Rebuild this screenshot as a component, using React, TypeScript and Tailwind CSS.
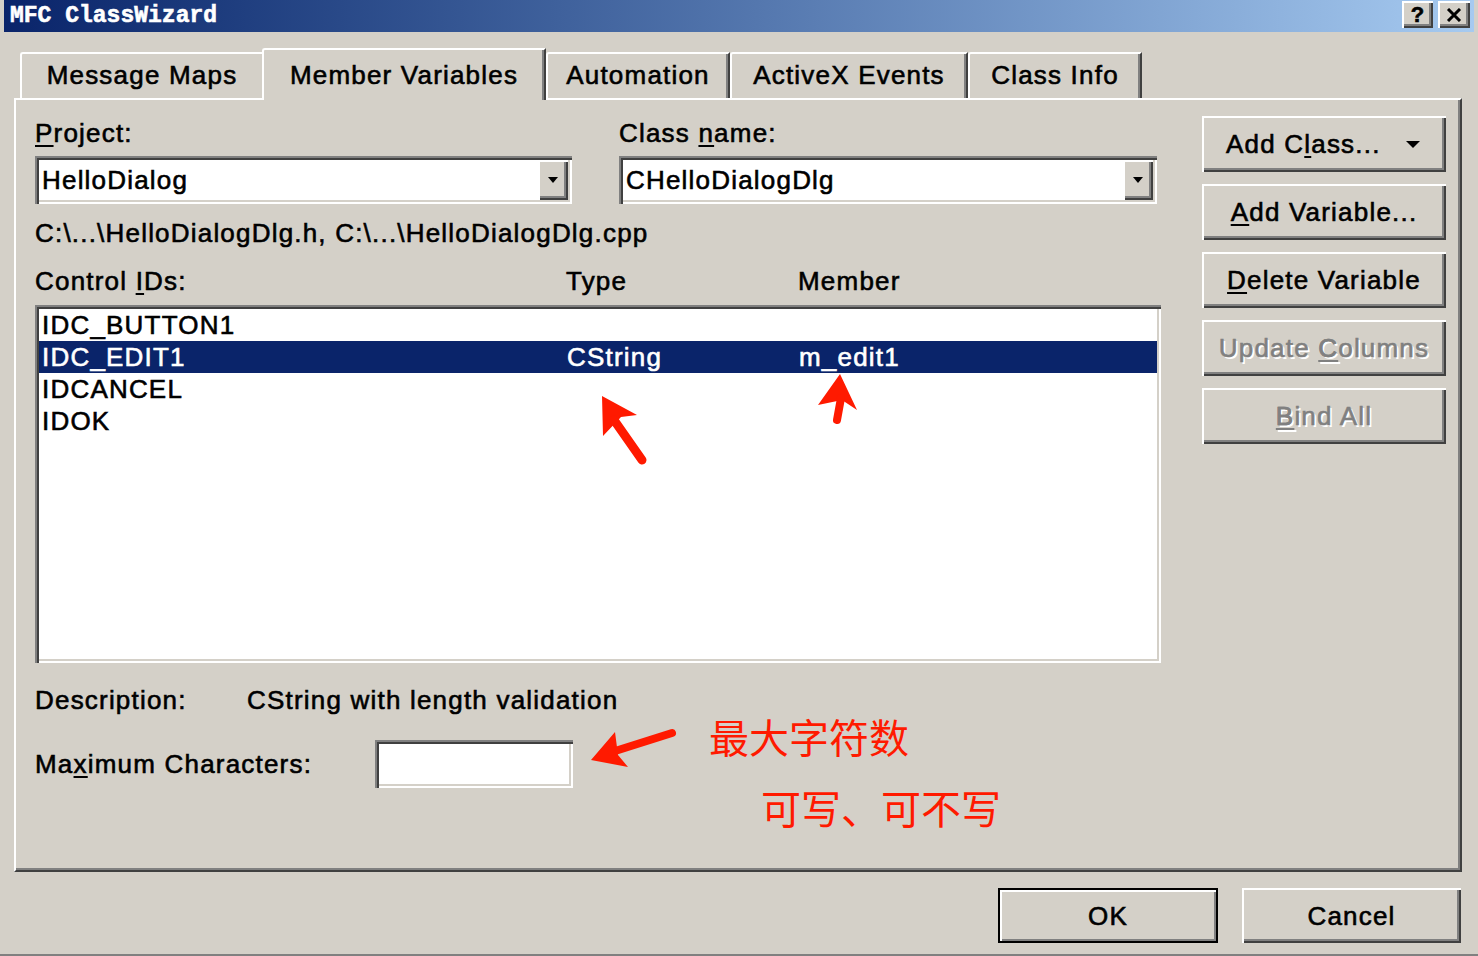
import React from 'react';

const raised = 'shadow-[inset_2px_2px_0_#ffffff,inset_-2px_-2px_0_#404040,inset_-4px_-4px_0_#808080]';
const sunken = 'shadow-[inset_2px_2px_0_#808080,inset_4px_4px_0_#404040,inset_-2px_-2px_0_#ffffff,inset_-4px_-4px_0_#d4d0c8]';

function Arrow({ w = 10, h = 6 }: { w?: number; h?: number }) {
  return (
    <svg width={w} height={h} viewBox={`0 0 ${w} ${h}`}>
      <polygon points={`0,0 ${w},0 ${w / 2},${h}`} fill="#000" />
    </svg>
  );
}

function Combo({ value }: { value: string }) {
  return (
    <div className={`flex h-[48px] items-center bg-white pl-[7px] pr-[4px] ${sunken}`}>
      <span className="flex-1">{value}</span>
      <div className={`flex h-[40px] w-[30px] items-center justify-center bg-[#d4d0c8] ${raised}`}>
        <Arrow />
      </div>
    </div>
  );
}

function SideButton({ children, disabled }: { children: React.ReactNode; disabled?: boolean }) {
  return (
    <div
      className={`flex h-[56px] w-[244px] items-center justify-center ${raised} ${
        disabled ? 'text-[#808080] [text-shadow:2px_2px_0_#ffffff]' : ''
      }`}
    >
      <span>{children}</span>
    </div>
  );
}

const U = ({ children }: { children: React.ReactNode }) => (
  <u className="underline decoration-[2px] underline-offset-[3px]">{children}</u>
);

export default function App() {
  const rows = [
    { id: 'IDC_BUTTON1', type: '', member: '', selected: false },
    { id: 'IDC_EDIT1', type: 'CString', member: 'm_edit1', selected: true },
    { id: 'IDCANCEL', type: '', member: '', selected: false },
    { id: 'IDOK', type: '', member: '', selected: false },
  ];

  return (
    <div className="relative h-[956px] w-[1478px] overflow-hidden border-b-2 border-[#808080] bg-[#d4d0c8] font-['Liberation_Sans',Arial,sans-serif] text-[26px] leading-[30px] tracking-[1.2px] text-black [-webkit-text-stroke:0.6px]">
      {/* title bar */}
      <div className="ml-[4px] flex h-[32px] w-[1470px] bg-linear-to-r from-[#0a246a] to-[#a6caf0] pl-[6px] pr-[4px]">
        <span className="self-center font-['Liberation_Mono',monospace] text-[23px] font-bold leading-none tracking-normal text-white">
          MFC ClassWizard
        </span>
        <div className="ml-auto flex gap-[5px] pt-[1px]">
          <div className={`flex h-[27px] w-[31px] items-center justify-center bg-[#d4d0c8] text-[22px] font-bold leading-none tracking-normal ${raised}`}>
            ?
          </div>
          <div className={`flex h-[27px] w-[32px] items-center justify-center bg-[#d4d0c8] ${raised}`}>
            <svg width="16" height="14" viewBox="0 0 16 14">
              <path d="M2 1 L14 13 M14 1 L2 13" stroke="#000" strokeWidth="3" />
            </svg>
          </div>
        </div>
      </div>

      {/* tabs */}
      <div className="relative z-10 mt-[16px] flex h-[50px] items-end pl-[20px]">
        <div className="flex h-[46px] w-[242px] items-center justify-center rounded-tl-[3px] border-l-2 border-t-2 border-white pb-[2px]">
          Message Maps
        </div>
        <div className="-mb-[2px] flex h-[52px] w-[284px] items-center justify-center rounded-tl-[3px] border-l-2 border-r-2 border-t-2 border-white border-r-[#404040] bg-[#d4d0c8] shadow-[inset_-2px_0_0_#808080]">
          Member Variables
        </div>
        <div className="flex h-[46px] w-[184px] items-center justify-center rounded-tl-[3px] border-l-2 border-r-2 border-t-2 border-white border-r-[#404040] pb-[2px] shadow-[inset_-2px_0_0_#808080]">
          Automation
        </div>
        <div className="flex h-[46px] w-[238px] items-center justify-center rounded-tl-[3px] border-l-2 border-r-2 border-t-2 border-white border-r-[#404040] pb-[2px] shadow-[inset_-2px_0_0_#808080]">
          ActiveX Events
        </div>
        <div className="flex h-[46px] w-[174px] items-center justify-center rounded-tl-[3px] border-l-2 border-r-2 border-t-2 border-white border-r-[#404040] pb-[2px] shadow-[inset_-2px_0_0_#808080]">
          Class Info
        </div>
      </div>

      {/* tab panel */}
      <div className="ml-[14px] flex h-[774px] w-[1448px] border-2 border-white border-b-[#404040] border-r-[#404040] shadow-[inset_-2px_-2px_0_#808080]">
        <div className="w-[1145px] pl-[19px] pt-[18px]">
          <div className="flex gap-[47px]">
            <div className="w-[537px]">
              <div>
                <U>P</U>roject:
              </div>
              <div className="mt-[8px]">
                <Combo value="HelloDialog" />
              </div>
            </div>
            <div className="w-[538px]">
              <div>
                Class <U>n</U>ame:
              </div>
              <div className="mt-[8px]">
                <Combo value="CHelloDialogDlg" />
              </div>
            </div>
          </div>

          <div className="mt-[14px]">C:\...\HelloDialogDlg.h, C:\...\HelloDialogDlg.cpp</div>

          <div className="mt-[18px] grid grid-cols-[531px_232px_1fr]">
            <div>
              Control <U>I</U>Ds:
            </div>
            <div>Type</div>
            <div>Member</div>
          </div>

          <div className={`mt-[9px] h-[358px] w-[1126px] bg-white px-[4px] pt-[4px] ${sunken}`}>
            {rows.map((r) => (
              <div
                key={r.id}
                className={`grid h-[32px] grid-cols-[525px_232px_1fr] items-center pl-[3px] ${
                  r.selected ? 'bg-[#0a246a] text-white' : ''
                }`}
              >
                <span>{r.id}</span>
                <span>{r.type}</span>
                <span>{r.member}</span>
              </div>
            ))}
          </div>

          <div className="mt-[22px] flex">
            <span className="w-[212px]">Description:</span>
            <span>CString with length validation</span>
          </div>

          <div className="mt-[25px] flex items-center">
            <span className="w-[340px]">
              Ma<U>x</U>imum Characters:
            </span>
            <div className={`h-[48px] w-[198px] bg-white ${sunken}`} />
          </div>
        </div>

        <div className="ml-auto flex flex-col gap-[12px] pr-[14px] pt-[16px]">
          <div className={`flex h-[56px] w-[244px] items-center justify-between pl-[24px] pr-[26px] ${raised}`}>
            <span>
              Add C<U>l</U>ass...
            </span>
            <Arrow w={14} h={7} />
          </div>
          <SideButton>
            <U>A</U>dd Variable...
          </SideButton>
          <SideButton>
            <U>D</U>elete Variable
          </SideButton>
          <SideButton disabled>
            Update <U>C</U>olumns
          </SideButton>
          <SideButton disabled>
            <U>B</U>ind All
          </SideButton>
        </div>
      </div>

      {/* dialog buttons */}
      <div className="mt-[16px] flex justify-end gap-[24px] pr-[17px]">
        <div className="flex h-[55px] w-[220px] items-center justify-center border-2 border-black shadow-[inset_2px_2px_0_#ffffff,inset_-2px_-2px_0_#808080]">
          OK
        </div>
        <div className={`flex h-[55px] w-[219px] items-center justify-center ${raised}`}>Cancel</div>
      </div>

      {/* red annotations */}
      <svg className="pointer-events-none absolute left-0 top-0" width="1478" height="956" viewBox="0 0 1478 956">
        <g fill="#ff1a00" stroke="#ff1a00" strokeLinecap="round">
          <polygon points="602,396 637,415 621,417 603,436" stroke="none" />
          <line x1="614" y1="420" x2="642" y2="460" strokeWidth="9" />
          <polygon points="840,374 857,410 842,400 818,405" stroke="none" />
          <line x1="841" y1="398" x2="837" y2="420" strokeWidth="8" />
          <polygon points="591,760 615,732 618,755 628,767" stroke="none" />
          <line x1="612" y1="752" x2="672" y2="733" strokeWidth="8" />
        </g>
      </svg>
      <span className="absolute left-[709px] top-[714px] font-['Noto_Sans_CJK_SC',sans-serif] text-[40px] leading-[44px] tracking-normal text-[#ff1a00] [-webkit-text-stroke:0px]">
        最大字符数
      </span>
      <span className="absolute left-[761px] top-[785px] font-['Noto_Sans_CJK_SC',sans-serif] text-[40px] leading-[44px] tracking-normal text-[#ff1a00] [-webkit-text-stroke:0px]">
        可写、可不写
      </span>
    </div>
  );
}
